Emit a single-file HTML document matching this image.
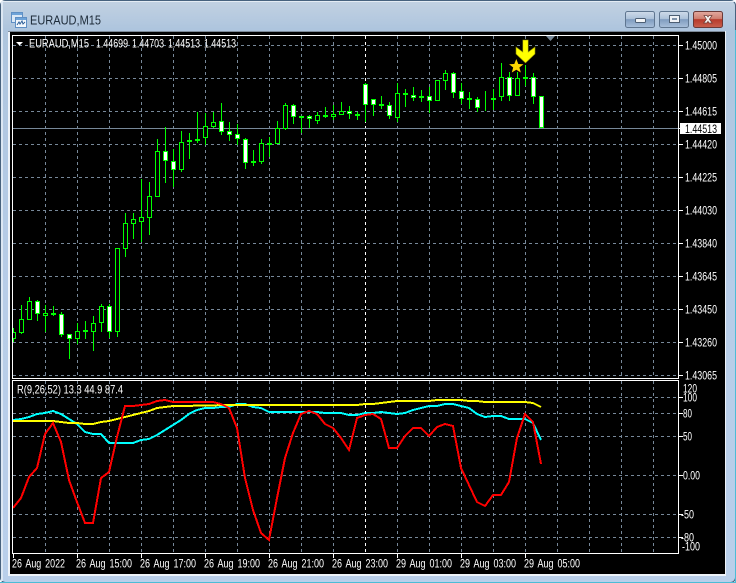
<!DOCTYPE html>
<html><head><meta charset="utf-8"><title>EURAUD,M15</title>
<style>html,body{margin:0;padding:0;background:#fff;overflow:hidden}svg{display:block}text{font-family:"Liberation Sans",sans-serif;font-size:12px;fill:#fff}</style></head>
<body>
<svg width="736" height="583" viewBox="0 0 736 583" xmlns="http://www.w3.org/2000/svg">
<defs>
<linearGradient id="glass" x1="0" y1="0" x2="0" y2="1"><stop offset="0" stop-color="#c3d2e2"/><stop offset="0.05" stop-color="#aec5de"/><stop offset="0.5" stop-color="#b7cde8"/><stop offset="1" stop-color="#b9cfea"/></linearGradient>
<linearGradient id="btn" x1="0" y1="0" x2="0" y2="1"><stop offset="0" stop-color="#cfdbe9"/><stop offset="0.45" stop-color="#adc2da"/><stop offset="0.5" stop-color="#7f9cbf"/><stop offset="1" stop-color="#a9c0db"/></linearGradient>
<linearGradient id="cls" x1="0" y1="0" x2="0" y2="1"><stop offset="0" stop-color="#e2aaa0"/><stop offset="0.45" stop-color="#cf7f70"/><stop offset="0.5" stop-color="#b73a2b"/><stop offset="1" stop-color="#c8604e"/></linearGradient>
<clipPath id="mc"><rect x="13" y="36" width="665" height="342"/></clipPath>
<clipPath id="ic"><rect x="13" y="381" width="665" height="172"/></clipPath>
</defs>
<rect x="0" y="0" width="736" height="583" rx="5" fill="url(#glass)"/>
<rect x="0.5" y="0.5" width="735" height="582" rx="5" fill="none" stroke="#47627e"/>
<path d="M0 582.5H736M735.5 30V583" stroke="#4cbcd6" fill="none"/>
<rect x="1" y="1" width="734" height="1" fill="#e4ecf4"/>
<rect x="1" y="2" width="2" height="579" fill="#dce7f3"/>
<rect x="8" y="31" width="718" height="545" fill="#eef3f9"/>
<rect x="8" y="31" width="717" height="1" fill="#7d8a98"/>
<rect x="10" y="32" width="715" height="542" fill="#000"/>

<!-- app icon -->
<rect x="11.5" y="12.5" width="11" height="10" fill="#dbe8f6" stroke="#5f8fc4"/>
<rect x="12" y="13" width="10" height="2" fill="#6ea3d8"/>
<rect x="15.5" y="17.5" width="11" height="10" fill="#f4f8fc" stroke="#5f8fc4"/>
<rect x="16" y="18" width="10" height="2" fill="#6ea3d8"/>
<path d="M17 25l2-3 1 2 2-3 1 3 2-2" fill="none" stroke="#2e5f98"/>
<text x="30" y="24.5" textLength="71" lengthAdjust="spacingAndGlyphs" style="font-size:13px;fill:#1c2a38">EURAUD,M15</text>

<!-- window buttons -->
<rect x="625.5" y="11.5" width="29" height="16" rx="2" fill="url(#btn)" stroke="#5f7690"/>
<rect x="659.5" y="11.5" width="29" height="16" rx="2" fill="url(#btn)" stroke="#5f7690"/>
<rect x="693.5" y="11.5" width="29" height="16" rx="2" fill="url(#cls)" stroke="#6b3a38"/>
<rect x="635.5" y="18.5" width="10" height="4" rx="1" fill="#f4f6f8" stroke="#4d5f74"/>
<rect x="669.5" y="15.5" width="10" height="7" fill="#f0f3f7" stroke="#4d5f74"/>
<rect x="672" y="18" width="5" height="2" fill="#7f93aa"/>
<path d="M704 15.5h3l1 1.5 1-1.5h3l-2.6 3.8 2.8 3.7h-3.2L708 21.3 706.8 23h-3.2l2.8-3.7z" fill="#f6f4f2" stroke="#6d3d38" stroke-width=".7"/>

<!-- grid -->
<g fill="none" stroke="#778899" stroke-dasharray="3 3" shape-rendering="crispEdges">
<path d="M13 45.5H678M13 78.5H678M13 111.5H678M13 144.5H678M13 177.5H678M13 210.5H678M13 243.5H678M13 276.5H678M13 309.5H678M13 342.5H678M13 375.5H678"/>
<path d="M45.5 36V378M77.5 36V378M109.5 36V378M141.5 36V378M173.5 36V378M205.5 36V378M237.5 36V378M269.5 36V378M301.5 36V378M333.5 36V378M397.5 36V378M429.5 36V378M461.5 36V378M493.5 36V378M525.5 36V378M557.5 36V378M589.5 36V378M621.5 36V378M653.5 36V378"/>
<path d="M13 397.5H678M13 413.5H678M13 436.5H678M13 475.5H678M13 514.5H678M13 537.5H678"/>
<path d="M45.5 381V553M77.5 381V553M109.5 381V553M141.5 381V553M173.5 381V553M205.5 381V553M237.5 381V553M269.5 381V553M301.5 381V553M333.5 381V553M397.5 381V553M429.5 381V553M461.5 381V553M493.5 381V553M525.5 381V553M557.5 381V553M589.5 381V553M621.5 381V553M653.5 381V553"/>
</g>
<path d="M365.5 36V378M365.5 381V553" fill="none" stroke="#fff" stroke-dasharray="3 3" shape-rendering="crispEdges"/>
<path d="M13 128.5H678" stroke="#778899" shape-rendering="crispEdges"/>

<!-- candles -->
<g clip-path="url(#mc)" shape-rendering="crispEdges">
<path fill="none" stroke="#00ff00" d="M13.5 328V342M21.5 305V334M29.5 297V320M37.5 300V321M45.5 305V332M53.5 306V316M61.5 312V337M69.5 334V359M77.5 323V344M85.5 321V339M93.5 316V351M101.5 304V332M109.5 304V338M117.5 248V337M125.5 213V257M133.5 213V239M141.5 179V242M149.5 182V235M157.5 139V197M165.5 127V183M173.5 149V187M181.5 131V172M189.5 133V159M197.5 112V143M205.5 113V145M213.5 112V128M221.5 103V135M229.5 122V141M237.5 124V145M245.5 138V169M253.5 150V166M261.5 139V164M269.5 137V157M277.5 121V144M285.5 103V130M293.5 104V124M301.5 116V133M309.5 115V128M317.5 112V124M325.5 107V118M333.5 105V120M341.5 102V115M349.5 106V119M357.5 112V120M365.5 83V122M373.5 99V116M381.5 96V109M389.5 102V119M397.5 83V122M405.5 89V107M413.5 87V101M421.5 90V102M429.5 87V113M437.5 80V101M445.5 70V90M453.5 72V98M461.5 83V104M469.5 92V109M477.5 97V112M485.5 91V111M493.5 89V110M501.5 63V101M509.5 72V101M517.5 72V96M525.5 65V86M533.5 73V104"/>
<path fill="#fff" stroke="#00ff00" d="M35.5 301.5h4v12h-4zM59.5 314.5h4v20h-4zM67.5 334.5h4v4h-4zM83.5 330.5h4v1h-4zM107.5 306.5h4v25h-4zM163.5 151.5h4v9h-4zM171.5 161.5h4v8h-4zM219.5 121.5h4v10h-4zM227.5 131.5h4v3h-4zM235.5 134.5h4v4h-4zM243.5 139.5h4v23h-4zM291.5 105.5h4v11h-4zM307.5 116.5h4v2h-4zM347.5 111.5h4v2h-4zM363.5 84.5h4v20h-4zM371.5 99.5h4v5h-4zM387.5 105.5h4v10h-4zM411.5 95.5h4v2h-4zM427.5 96.5h4v4h-4zM451.5 73.5h4v19h-4zM459.5 91.5h4v7h-4zM475.5 99.5h4v8h-4zM507.5 77.5h4v18h-4zM531.5 77.5h4v19h-4zM539.5 96.5h4v31h-4z"/>
<path fill="#000" stroke="#00ff00" d="M11.5 332.5h4v6h-4zM19.5 319.5h4v13h-4zM27.5 301.5h4v18h-4zM43.5 313.5h4v2h-4zM75.5 331.5h4v7h-4zM91.5 323.5h4v8h-4zM99.5 306.5h4v16h-4zM115.5 248.5h4v83h-4zM123.5 223.5h4v25h-4zM131.5 219.5h4v4h-4zM139.5 217.5h4v4h-4zM147.5 196.5h4v21h-4zM155.5 151.5h4v45h-4zM179.5 142.5h4v27h-4zM187.5 140.5h4v1h-4zM203.5 126.5h4v11h-4zM211.5 122.5h4v4h-4zM259.5 143.5h4v18h-4zM275.5 128.5h4v15h-4zM283.5 105.5h4v23h-4zM315.5 115.5h4v5h-4zM331.5 114.5h4v2h-4zM339.5 111.5h4v3h-4zM395.5 93.5h4v24h-4zM435.5 80.5h4v20h-4zM443.5 73.5h4v7h-4zM491.5 98.5h4v1h-4zM499.5 77.5h4v19h-4zM515.5 78.5h4v17h-4z"/>
<path fill="#00ff00" d="M51 313h5v2h-5zM195 139h5v2h-5zM251 161h5v2h-5zM267 143h5v2h-5zM299 116h5v2h-5zM323 115h5v2h-5zM355 114h5v2h-5zM379 104h5v2h-5zM403 93h5v2h-5zM419 96h5v2h-5zM467 98h5v2h-5zM523 77h5v2h-5z"/>
</g>

<!-- objects -->
<polygon points="546,36 555,36 550.5,41" fill="#778899"/>
<polygon points="516.3,59 518.3,64 523.5,64.3 519.4,67.5 520.8,72.5 516.3,69.7 511.8,72.5 513.2,67.5 509.1,64.3 514.3,64" fill="#ffd700"/>
<polygon points="522.8,40 528.2,40 528.2,52 535,47 535,54 525.5,63 516,54 516,47 522.8,52" fill="#ffff00" stroke="#8a8a00" stroke-width=".6"/>

<!-- indicator -->
<g clip-path="url(#ic)" fill="none" stroke-width="2" shape-rendering="crispEdges">
<polyline stroke="#00ffff" points="13,420 21,419 29,417 37,414 45,413 53,411 61,414 69,419 77,424 85,432 93,434 101,434 109,443 117,443 125,443 133,443 141,440 149,439 157,435 165,430 173,425 181,420 189,414 197,410 205,408 213,408 221,407 229,407 237,404 245,404 253,407 261,408 269,412 277,412 285,412 293,412 301,412 309,412 317,412 325,413 333,413 341,413 349,415 357,415 365,413 373,413 381,412 389,413 397,414 405,413 413,410 421,408 429,406 437,406 445,404 453,404 461,406 469,408 477,414 485,417 493,416 501,416 509,419 517,419 525,419 533,423 541,440"/>
<polyline stroke="#ffff00" points="13,421 53,421 61,422 69,423 77,423 85,424 93,424 101,422 109,421 117,419 125,417 133,415 141,413 149,411 157,408 165,407 173,406 181,406 229,405 357,405 365,404 373,404 381,403 389,402 397,401 429,401 437,400 461,400 469,401 477,401 485,402 525,402 533,403 541,407"/>
<polyline stroke="#ff0000" points="13,508 21,498 29,477 37,468 45,434 53,423 61,442 69,480 77,502 85,523 93,523 101,478 109,472 117,437 125,406 133,406 141,405 149,404 157,401 165,400 173,402 181,402 189,402 197,402 205,402 213,402 221,404 229,408 237,428 245,478 253,510 261,533 269,540 277,498 285,458 293,433 301,414 309,411 317,414 325,424 333,428 341,438 349,450 357,418 365,415 373,414 381,419 389,448 397,448 405,436 413,428 421,428 429,436 437,427 445,424 453,426 461,468 469,485 477,502 485,506 493,495 501,495 509,482 517,438 525,414 533,422 541,464"/>
</g>

<!-- frames and ticks -->
<g fill="none" stroke="#fff" shape-rendering="crispEdges">
<rect x="12.5" y="35.5" width="666" height="343"/>
<rect x="12.5" y="380.5" width="666" height="173"/>
<path d="M679 45.5h4M679 78.5h4M679 111.5h4M679 144.5h4M679 177.5h4M679 210.5h4M679 243.5h4M679 276.5h4M679 309.5h4M679 342.5h4M679 375.5h4M679 397.5h4M679 413.5h4M679 436.5h4M679 475.5h4M679 514.5h4M679 537.5h4"/>
<path d="M13.5 554v4M77.5 554v4M141.5 554v4M205.5 554v4M269.5 554v4M333.5 554v4M397.5 554v4M461.5 554v4M525.5 554v4"/>
</g>
<polygon points="16,42 23,42 19.5,45.5" fill="#fff"/>

<!-- legends -->
<text x="29" y="47.5" textLength="60" lengthAdjust="spacingAndGlyphs">EURAUD,M15</text>
<text x="96" y="47.5" textLength="32" lengthAdjust="spacingAndGlyphs">1.44699</text>
<text x="132" y="47.5" textLength="32" lengthAdjust="spacingAndGlyphs">1.44703</text>
<text x="168" y="47.5" textLength="32" lengthAdjust="spacingAndGlyphs">1.44513</text>
<text x="204" y="47.5" textLength="32" lengthAdjust="spacingAndGlyphs">1.44513</text>
<text x="17" y="393.5" textLength="106" lengthAdjust="spacingAndGlyphs">R(9,26,52) 13.3 44.9 87.4</text>

<!-- price axis -->
<g>
<text x="685" y="49.5" textLength="32" lengthAdjust="spacingAndGlyphs">1.45000</text>
<text x="685" y="82.5" textLength="32" lengthAdjust="spacingAndGlyphs">1.44805</text>
<text x="685" y="115.5" textLength="32" lengthAdjust="spacingAndGlyphs">1.44615</text>
<text x="685" y="148.5" textLength="32" lengthAdjust="spacingAndGlyphs">1.44420</text>
<text x="685" y="181.5" textLength="32" lengthAdjust="spacingAndGlyphs">1.44225</text>
<text x="685" y="214.5" textLength="32" lengthAdjust="spacingAndGlyphs">1.44030</text>
<text x="685" y="247.5" textLength="32" lengthAdjust="spacingAndGlyphs">1.43840</text>
<text x="685" y="280.5" textLength="32" lengthAdjust="spacingAndGlyphs">1.43645</text>
<text x="685" y="313.5" textLength="32" lengthAdjust="spacingAndGlyphs">1.43450</text>
<text x="685" y="346.5" textLength="32" lengthAdjust="spacingAndGlyphs">1.43260</text>
<text x="685" y="379.5" textLength="32" lengthAdjust="spacingAndGlyphs">1.43065</text>
<rect x="680" y="123" width="41" height="11" fill="#fff"/>
<path d="M678 128.5h3" stroke="#fff"/>
<text x="685" y="133" textLength="32" lengthAdjust="spacingAndGlyphs" style="fill:#000">1.44513</text>
<text x="683" y="392.5" textLength="14" lengthAdjust="spacingAndGlyphs">120</text>
<text x="683" y="401.5" textLength="14" lengthAdjust="spacingAndGlyphs">100</text>
<text x="683" y="417.5" textLength="9" lengthAdjust="spacingAndGlyphs">80</text>
<text x="683" y="440.5" textLength="9" lengthAdjust="spacingAndGlyphs">50</text>
<text x="683" y="479.5" textLength="17" lengthAdjust="spacingAndGlyphs">0.00</text>
<text x="681" y="518.5" textLength="13" lengthAdjust="spacingAndGlyphs">-50</text>
<text x="681" y="541.5" textLength="13" lengthAdjust="spacingAndGlyphs">-80</text>
<text x="682" y="550.5" textLength="18" lengthAdjust="spacingAndGlyphs">-100</text>
</g>

<!-- time axis -->
<g style="word-spacing:2px">
<text x="12" y="567.5" textLength="53" lengthAdjust="spacingAndGlyphs">26 Aug 2022</text>
<text x="76" y="567.5" textLength="56" lengthAdjust="spacingAndGlyphs">26 Aug 15:00</text>
<text x="140" y="567.5" textLength="56" lengthAdjust="spacingAndGlyphs">26 Aug 17:00</text>
<text x="204" y="567.5" textLength="56" lengthAdjust="spacingAndGlyphs">26 Aug 19:00</text>
<text x="268" y="567.5" textLength="56" lengthAdjust="spacingAndGlyphs">26 Aug 21:00</text>
<text x="332" y="567.5" textLength="56" lengthAdjust="spacingAndGlyphs">26 Aug 23:00</text>
<text x="396" y="567.5" textLength="56" lengthAdjust="spacingAndGlyphs">29 Aug 01:00</text>
<text x="460" y="567.5" textLength="56" lengthAdjust="spacingAndGlyphs">29 Aug 03:00</text>
<text x="524" y="567.5" textLength="56" lengthAdjust="spacingAndGlyphs">29 Aug 05:00</text>
</g>
</svg>
</body></html>
